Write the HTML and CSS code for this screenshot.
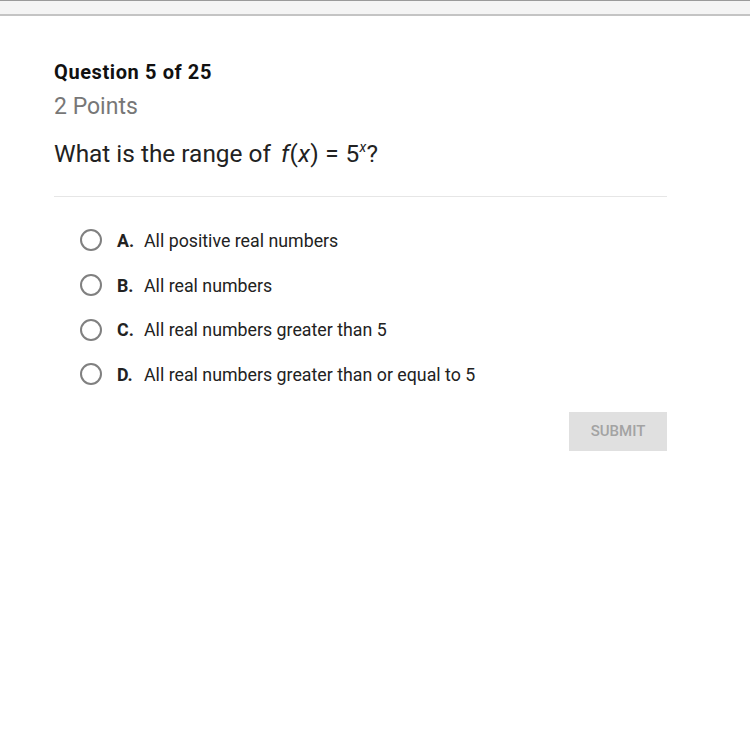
FILE: index.html
```html
<!DOCTYPE html>
<html>
<head>
<meta charset="utf-8">
<link rel="stylesheet" href="styles.css">
</head>
<body>
<div class="topbar"></div>
<main class="quiz">
  <div class="qnum">Question 5 of 25</div>
  <div class="points">2 Points</div>
  <div class="question">What is the range of <span class="math"><i>f</i>(<i>x</i>) = 5<sup><i>x</i></sup></span>?</div>
  <hr class="divider">
  <ul class="options">
    <li class="option"><span class="radio"></span><span class="letter">A.</span><span class="text">All positive real numbers</span></li>
    <li class="option"><span class="radio"></span><span class="letter">B.</span><span class="text">All real numbers</span></li>
    <li class="option"><span class="radio"></span><span class="letter">C.</span><span class="text">All real numbers greater than 5</span></li>
    <li class="option"><span class="radio"></span><span class="letter">D.</span><span class="text">All real numbers greater than or equal to 5</span></li>
  </ul>
  <div class="actions"><button class="submit">SUBMIT</button></div>
</main>
</body>
</html>
```
FILE: styles.css
```css
html, body { margin: 0; padding: 0; background: #fff; }
body { font-family: Roboto, "Liberation Sans", sans-serif; color: #222; }
.topbar {
  height: 13px;
  background: #f4f4f4;
  border-top: 1px solid #9a9a9a;
  border-bottom: 2px solid #c4c4c4;
}
.quiz { width: 613px; margin-left: 54px; padding-top: 43px; }
.qnum { font-size: 20px; font-weight: bold; line-height: 26px; color: #111; letter-spacing: 0.6px; }
.points { font-size: 23px; color: #777; line-height: 28px; margin-top: 8px; }
.question { font-size: 24.4px; line-height: 30px; color: #222; margin-top: 18px; }
.math { margin-left: 4px; letter-spacing: 0.3px; }
.question sup { font-size: 14px; line-height: 0; vertical-align: 10px; }
.divider { border: 0; border-top: 1px solid #e6e6e6; margin: 27px 0 0 0; }
.options { list-style: none; margin: 21px 0 0 0; padding: 0 0 0 26px; }
.option { display: flex; align-items: center; height: 44.7px; font-size: 17.8px; color: #222; }
.radio {
  width: 18px; height: 18px; border: 2px solid #808080; border-radius: 50%;
  box-sizing: content-box; margin-right: 15px; flex: none;
}
.letter { font-weight: bold; width: 27px; }
.actions { display: flex; justify-content: flex-end; margin-top: 15px; }
.submit {
  width: 98px; height: 39px; border: 0; background: #e0e0e0; color: #a3a3a3;
  font-family: Roboto, "Liberation Sans", sans-serif; font-size: 15px; font-weight: 500;
  padding: 0;
}
```
